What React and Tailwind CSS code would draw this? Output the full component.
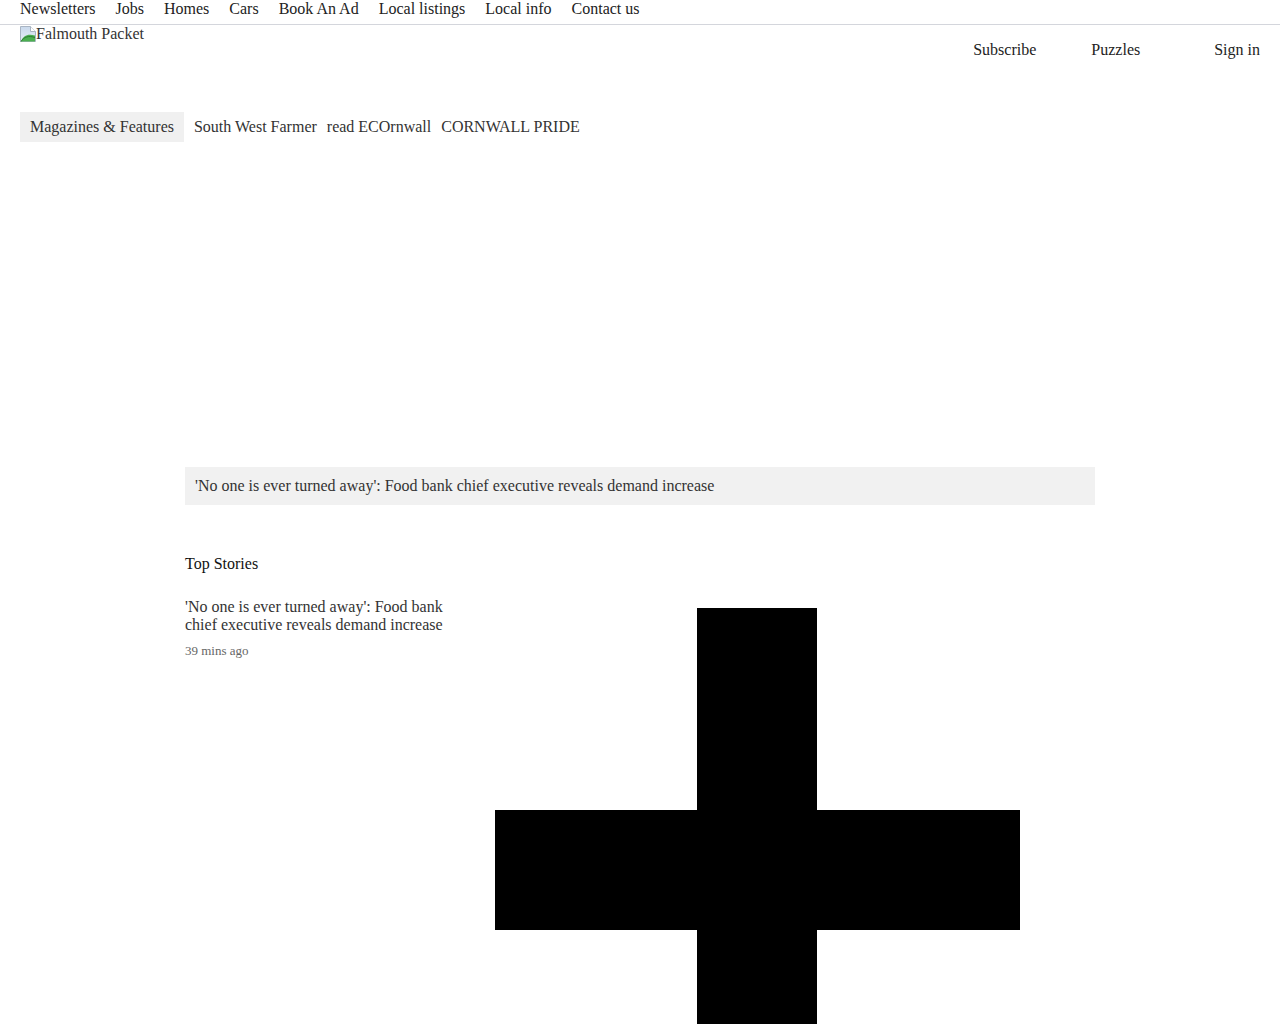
const topLinks = ['Newsletters', 'Jobs', 'Homes', 'Cars', 'Book An Ad', 'Local listings', 'Local info', 'Contact us'];
const subLinks = ['South West Farmer', 'read ECOrnwall', 'CORNWALL PRIDE'];

function BrokenImage() {
  return (
    <svg width="16" height="16" viewBox="0 0 16 16" className="shrink-0">
      <defs>
        <linearGradient id="sky" x1="0" y1="0" x2="0" y2="1">
          <stop offset="0" stopColor="#c9d9ec" />
          <stop offset="1" stopColor="#e8eef6" />
        </linearGradient>
      </defs>
      <path d="M0.5 0.5h10l5 5v10h-15z" fill="url(#sky)" stroke="#a9b4c2" />
      <path d="M10.5 0.5v5h5" fill="#fff" stroke="#a9b4c2" />
      <path d="M1 15.5c2-6 7-8 14-6v6z" fill="#4caf50" />
      <path d="M1 15.5c3-5 8-6 14-4" fill="none" stroke="#2e7d32" />
    </svg>
  );
}

function Cross() {
  return (
    <svg width="525" height="525" viewBox="0 0 525 525" className="block shrink-0">
      <rect x="202" y="0" width="120" height="525" fill="#000" />
      <rect x="0" y="202" width="525" height="120" fill="#000" />
    </svg>
  );
}

export default function App() {
  return (
    <div className="min-h-screen bg-white text-[16px] leading-[18px] text-[#222] font-['Liberation_Serif',serif]">
      <nav className="h-[25px] border-b border-[#d4d6dc] px-[20px] flex items-start gap-[20px]">
        {topLinks.map((l) => (
          <a key={l} className="leading-[18px]">{l}</a>
        ))}
      </nav>

      <header className="px-[20px] flex items-start justify-between h-[87px]">
        <div className="flex items-center h-[18px] text-[#333]">
          <BrokenImage />
          <span className="leading-[18px]">Falmouth Packet</span>
        </div>
        <div className="flex items-center mt-[16px] text-[#222]">
          <a>Subscribe</a>
          <a className="ml-[55px]">Puzzles</a>
          <a className="ml-[74px]">Sign in</a>
        </div>
      </header>

      <div className="px-[20px] flex items-center gap-[10px] text-[#333]">
        <a className="bg-[#f0f0f0] px-[10px] h-[30px] flex items-center">Magazines &amp; Features</a>
        {subLinks.map((l) => (
          <a key={l}>{l}</a>
        ))}
      </div>

      <main className="w-[910px] mx-auto pt-[325px]">
        <div className="bg-[#f1f1f1] h-[38px] px-[10px] flex items-center text-[#333]">
          'No one is ever turned away': Food bank chief executive reveals demand increase
        </div>

        <h2 className="mt-[50px] text-[#111]">Top Stories</h2>

        <div className="mt-[25px] flex gap-[50px] items-start">
          <article className="w-[260px] shrink-0 text-[#333]">
            <a className="block">'No one is ever turned away': Food bank chief executive reveals demand increase</a>
            <time className="block mt-[9px] text-[13px] leading-[16px] text-[#666]">39 mins ago</time>
          </article>
          <div className="pt-[10px]">
            <Cross />
          </div>
        </div>
      </main>
    </div>
  );
}
